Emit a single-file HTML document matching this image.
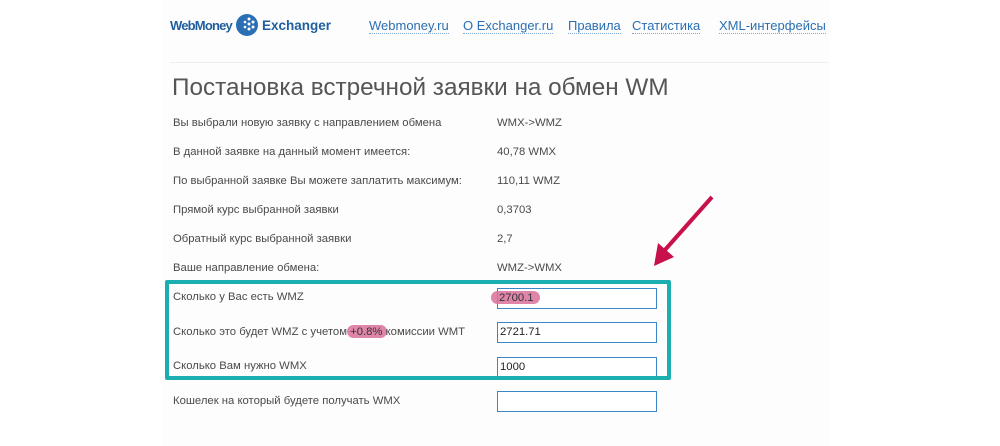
<!DOCTYPE html>
<html><head><meta charset="utf-8"><style>
body{margin:0;width:1000px;height:446px;background:#fff;font-family:"Liberation Sans",sans-serif;position:relative;overflow:hidden}
.bg{position:absolute;left:163px;top:0;width:666px;height:446px;background:#fdfdfd}
.t{position:absolute;font-size:11.3px;color:#4a4a4a;white-space:nowrap}
.nav{position:absolute;top:18px;color:#2a6fb3;border-bottom:1px dotted #7aa7d6;line-height:15px;font-family:"Liberation Sans",sans-serif;font-size:13px}
.in{position:absolute;left:497px;border:1px solid #3a86c8;background:#fff;font-size:11.3px;color:#222;line-height:19px;padding-left:2px;box-sizing:border-box;width:160px;height:21px}
.hl{position:absolute;background:#d9709a;border-radius:8px;opacity:.85}
</style></head><body>
<div class="bg"></div>
<div class="t" style="left:170px;top:18px;font-size:13px;color:#1f5f9f;font-weight:bold;letter-spacing:-0.8px">WebMoney</div>
<svg style="position:absolute;left:235px;top:12px" width="24" height="26"><circle cx="12" cy="13" r="11" fill="#2a6fb3"/><g fill="#fff"><circle cx="14" cy="7" r="1.5"/><circle cx="18" cy="10" r="1.5"/><circle cx="14" cy="12" r="1.5"/><circle cx="18" cy="15" r="1.5"/><circle cx="14" cy="17" r="1.5"/><circle cx="10" cy="10" r="1.3"/><circle cx="10" cy="15" r="1.3"/></g></svg>
<div class="t" style="left:262px;top:18px;font-size:13.5px;color:#1f5f9f;font-weight:bold">Exchanger</div>
<div class="nav" style="left:369px">Webmoney.ru</div>
<div class="nav" style="left:463px">О Exchanger.ru</div>
<div class="nav" style="left:568px">Правила</div>
<div class="nav" style="left:632px">Статистика</div>
<div class="nav" style="left:719px">XML-интерфейсы</div>
<div style="position:absolute;left:170px;top:62px;width:659px;height:1px;background:#eee"></div>
<div class="t" style="left:172px;top:74px;font-size:24.3px;color:#555">Постановка встречной заявки на обмен WM</div>
<div class="t" style="left:173px;top:117px">Вы выбрали новую заявку с направлением обмена</div><div class="t" style="left:497px;top:117px">WMX-&gt;WMZ</div>
<div class="t" style="left:173px;top:146px">В данной заявке на данный момент имеется:</div><div class="t" style="left:497px;top:146px">40,78 WMX</div>
<div class="t" style="left:173px;top:175px">По выбранной заявке Вы можете заплатить максимум:</div><div class="t" style="left:497px;top:175px">110,11 WMZ</div>
<div class="t" style="left:173px;top:204px">Прямой курс выбранной заявки</div><div class="t" style="left:497px;top:204px">0,3703</div>
<div class="t" style="left:173px;top:233px">Обратный курс выбранной заявки</div><div class="t" style="left:497px;top:233px">2,7</div>
<div class="t" style="left:173px;top:262px">Ваше направление обмена:</div><div class="t" style="left:497px;top:262px">WMZ-&gt;WMX</div>
<div class="t" style="left:173px;top:291px">Сколько у Вас есть WMZ</div>
<div class="in" style="top:288px"></div>
<div class="hl" style="left:491px;top:291px;width:49px;height:13px"></div>
<div class="t" style="left:499px;top:292px;color:#333">2700.1</div>
<div class="hl" style="left:347px;top:325px;width:40px;height:13px"></div>
<div class="t" style="left:173px;top:326px">Сколько это будет WMZ с учетом <span style="color:#333">+0.8%</span> комиссии WMT</div>
<div class="in" style="top:322px">2721.71</div>
<div class="t" style="left:173px;top:360px">Сколько Вам нужно WMX</div>
<div class="in" style="top:357px">1000</div>
<div class="t" style="left:173px;top:395px">Кошелек на который будете получать WMX</div>
<div class="in" style="top:391px"></div>
<div style="position:absolute;left:165px;top:280px;width:498px;height:92px;border:4px solid #1aaeb0;border-radius:2px"></div>
<svg style="position:absolute;left:640px;top:180px" width="100" height="100"><line x1="72" y1="17" x2="24" y2="71" stroke="#c8104a" stroke-width="4"/><polygon points="14,86 18,63 34,77" fill="#c8104a"/></svg>
</body></html>
